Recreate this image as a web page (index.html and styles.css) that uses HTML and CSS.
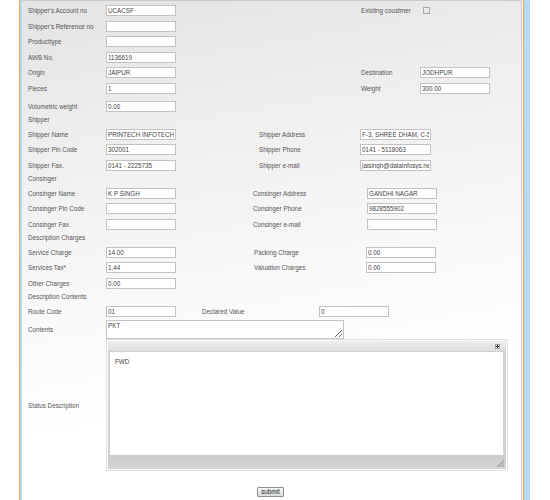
FILE: index.html
```html
<!DOCTYPE html>
<html>
<head>
<meta charset="utf-8">
<link rel="stylesheet" href="styles.css">
</head>
<body>
<div class="shell">
  <div class="panel">
    <form class="form">
      <div class="row"><span class="lbl">Shipper's Account no</span><input class="fld" value="UCACSF"><span class="lbl2 far">Existing coustmer</span><input type="checkbox" class="chk"></div>
      <div class="row"><span class="lbl">Shipper's Reference no</span><input class="fld" value=""></div>
      <div class="row"><span class="lbl">Producttype</span><input class="fld" value=""></div>
      <div class="row"><span class="lbl">AWB No.</span><input class="fld" value="1136619"></div>
      <div class="row"><span class="lbl">Origin</span><input class="fld" value="JAIPUR"><span class="lbl2 far">Destination</span><input class="fld" value="JODHPUR"></div>
      <div class="row"><span class="lbl">Pieces</span><input class="fld" value="1"><span class="lbl2 far">Weight</span><input class="fld" value="300.00"></div>
      <div class="row extra"><span class="lbl">Volumetric weight</span><input class="fld" value="0.00"></div>
      <div class="sec">Shipper</div>
      <div class="row"><span class="lbl">Shipper Name</span><input class="fld" value="PRINTECH INFOTECH"><span class="lbl2 shp">Shipper Address</span><input class="fld wide" value="F-3, SHREE DHAM, C-5"></div>
      <div class="row"><span class="lbl">Shipper Pin Code</span><input class="fld" value="302001"><span class="lbl2 shp">Shipper Phone</span><input class="fld wide" value="0141 - 5118063"></div>
      <div class="row"><span class="lbl">Shipper Fax.</span><input class="fld" value="0141 - 2225735"><span class="lbl2 shp">Shipper e-mail</span><input class="fld wide" value="jaisingh@datainfosys.net"></div>
      <div class="sec">Consinger</div>
      <div class="row"><span class="lbl">Consinger Name</span><input class="fld" value="K P SINGH"><span class="lbl2 con">Consinger Address</span><input class="fld" value="GANDHI NAGAR"></div>
      <div class="row"><span class="lbl">Consinger Pin Code</span><input class="fld" value="."><span class="lbl2 con">Consinger Phone</span><input class="fld" value="9828555902"></div>
      <div class="row"><span class="lbl">Consinger Fax.</span><input class="fld" value="."><span class="lbl2 con">Consinger e-mail</span><input class="fld" value="."></div>
      <div class="sec">Description Charges</div>
      <div class="row"><span class="lbl">Service Charge</span><input class="fld" value="14.00"><span class="lbl2 chg">Packing Charge</span><input class="fld" value="0.00"></div>
      <div class="row"><span class="lbl">Services Tax*</span><input class="fld" value="1.44"><span class="lbl2 chg">Valuation Charges</span><input class="fld" value="0.00"></div>
      <div class="row"><span class="lbl">Other Charges</span><input class="fld" value="0.00"></div>
      <div class="sec">Description Contents</div>
      <div class="row"><span class="lbl">Route Code</span><input class="fld" value="01"><span class="lbl2 dec">Declared Value</span><input class="fld" value="0"></div>
      <div class="row tall"><span class="lbl">Contents</span><textarea class="area">PKT</textarea></div>
      <div class="row edrow"><span class="lbl">Status Description</span>
        <div class="editor">
          <div class="ed-frame">
            <div class="ed-top"><span class="ed-max"></span></div>
            <div class="ed-body">FWD</div>
            <div class="ed-bot"><svg class="grip" width="7" height="7" viewBox="0 0 7 7"><path d="M7 0L0 7M7 2.5L2.5 7M7 5L5 7" stroke="#8a8a8a" stroke-width="1"/></svg></div>
          </div>
        </div>
      </div>
      <div class="actions"><button type="button" class="btn">submit</button></div>
    </form>
  </div>
</div>
</body>
</html>
```

FILE: styles.css
```css
html, body {
  margin: 0;
  padding: 0;
  background: #ffffff;
}
body {
  font-family: "Liberation Sans", Arial, sans-serif;
  font-size: 6.3px;
  color: #555555;
}
.shell {
  margin-left: 19px;
  width: 511px;
  height: 500px;
  box-sizing: border-box;
  border-left: 1px solid #f0a46c;
  border-right: 6px solid #b9d9f2;
  overflow: hidden;
}
.panel {
  height: 100%;
  box-sizing: border-box;
  border-left: 2px solid #b9d9f2;
  border-right: 1px solid #f0a46c;
  background: #ffffff;
}
.form {
  margin: 0 1px 0 0;
  height: 100%;
  box-sizing: border-box;
  border-top: 1px solid #c9c9c9;
  border-right: 1px solid #cdcdcd;
  padding: 4px 0 0 6px;
  background: linear-gradient(170deg, #e3e3e3 0%, #eeeeee 25%, #f9f9f9 55%, #ffffff 75%);
  display: flex;
  flex-direction: column;
  gap: 4.5px;
}
.row {
  display: flex;
  align-items: center;
  height: 11px;
}
.row.extra { margin-top: 2.5px; }
.sec {
  height: 8px;
  line-height: 8px;
  white-space: nowrap;
}
.lbl {
  flex: none;
  width: 78px;
  line-height: 11px;
  white-space: nowrap;
}
.lbl2 {
  flex: none;
  line-height: 11px;
  white-space: nowrap;
}
.far { margin-left: 185px; width: 59px; }
.shp { margin-left: 83px; width: 101px; }
.con { margin-left: 77px; width: 114px; }
.chg { margin-left: 78px; width: 112px; }
.dec { margin-left: 26px; width: 117px; }
.fld {
  flex: none;
  width: 70px;
  height: 11px;
  box-sizing: border-box;
  margin: 0;
  padding: 0 1px;
  border: 1px solid #c2c2c2;
  background: #ffffff;
  font-family: "Liberation Sans", Arial, sans-serif;
  font-size: 6.3px;
  color: #444444;
  line-height: 9px;
  outline: none;
}
.fld.wide { width: 71px; }
.chk {
  appearance: none;
  -webkit-appearance: none;
  flex: none;
  width: 7px;
  height: 7px;
  margin: 0 0 0 3px;
  box-sizing: border-box;
  border: 1px solid #a8a8a8;
  background: linear-gradient(#f4f4f4, #dedede);
}
.row.tall {
  height: 19px;
  margin-top: -1.5px;
}
.area {
  flex: none;
  width: 238px;
  height: 19px;
  box-sizing: border-box;
  margin: 0;
  padding: 1px 1px;
  border: 1px solid #c4c4c4;
  background: #ffffff;
  font-family: "Liberation Sans", Arial, sans-serif;
  font-size: 6.3px;
  line-height: 7px;
  color: #444444;
  resize: both;
  overflow: hidden;
}
.row.edrow {
  height: 132px;
  margin-top: -4px;
}
.editor {
  flex: none;
  width: 402px;
  height: 132px;
  box-sizing: border-box;
  border: 1px solid #e2e2e2;
  padding: 1px;
  background: #fafafa;
}
.ed-frame {
  height: 100%;
  display: flex;
  flex-direction: column;
  background: #d3d3d3;
  padding: 0 3px 0 2px;
  box-sizing: border-box;
}
.ed-top {
  flex: none;
  height: 11px;
  margin: 0 -3px 0 -2px;
  background: linear-gradient(#eeeeee, #dedede);
  border-bottom: 1px solid #cdcdcd;
  box-sizing: border-box;
  display: flex;
  justify-content: flex-end;
  align-items: center;
  padding-right: 6px;
}
.ed-max {
  width: 5px;
  height: 5px;
  box-sizing: border-box;
  border: 1px solid #9a9a9a;
  background: radial-gradient(circle, #222 0 1px, #fff 1.2px);
}
.ed-body {
  flex: 1;
  background: #ffffff;
  padding: 6px 5px;
  color: #444;
  line-height: 7px;
}
.ed-bot {
  flex: none;
  height: 12px;
  margin: 0 -3px 0 -2px;
  background: linear-gradient(#cbcbcb, #d6d6d6);
  display: flex;
  justify-content: flex-end;
  align-items: flex-end;
  padding: 0 2px 2px 0;
}
.actions {
  display: flex;
  justify-content: flex-start;
  margin-top: 11.5px;
  padding-left: 229px;
}
.btn {
  width: 27px;
  height: 10px;
  box-sizing: border-box;
  margin: 0;
  padding: 0;
  border: 1px solid #8e8e8e;
  border-radius: 1px;
  background: linear-gradient(#f6f6f6, #dcdcdc);
  font-family: "Liberation Sans", Arial, sans-serif;
  font-size: 6.3px;
  line-height: 8px;
  color: #222;
}
```
